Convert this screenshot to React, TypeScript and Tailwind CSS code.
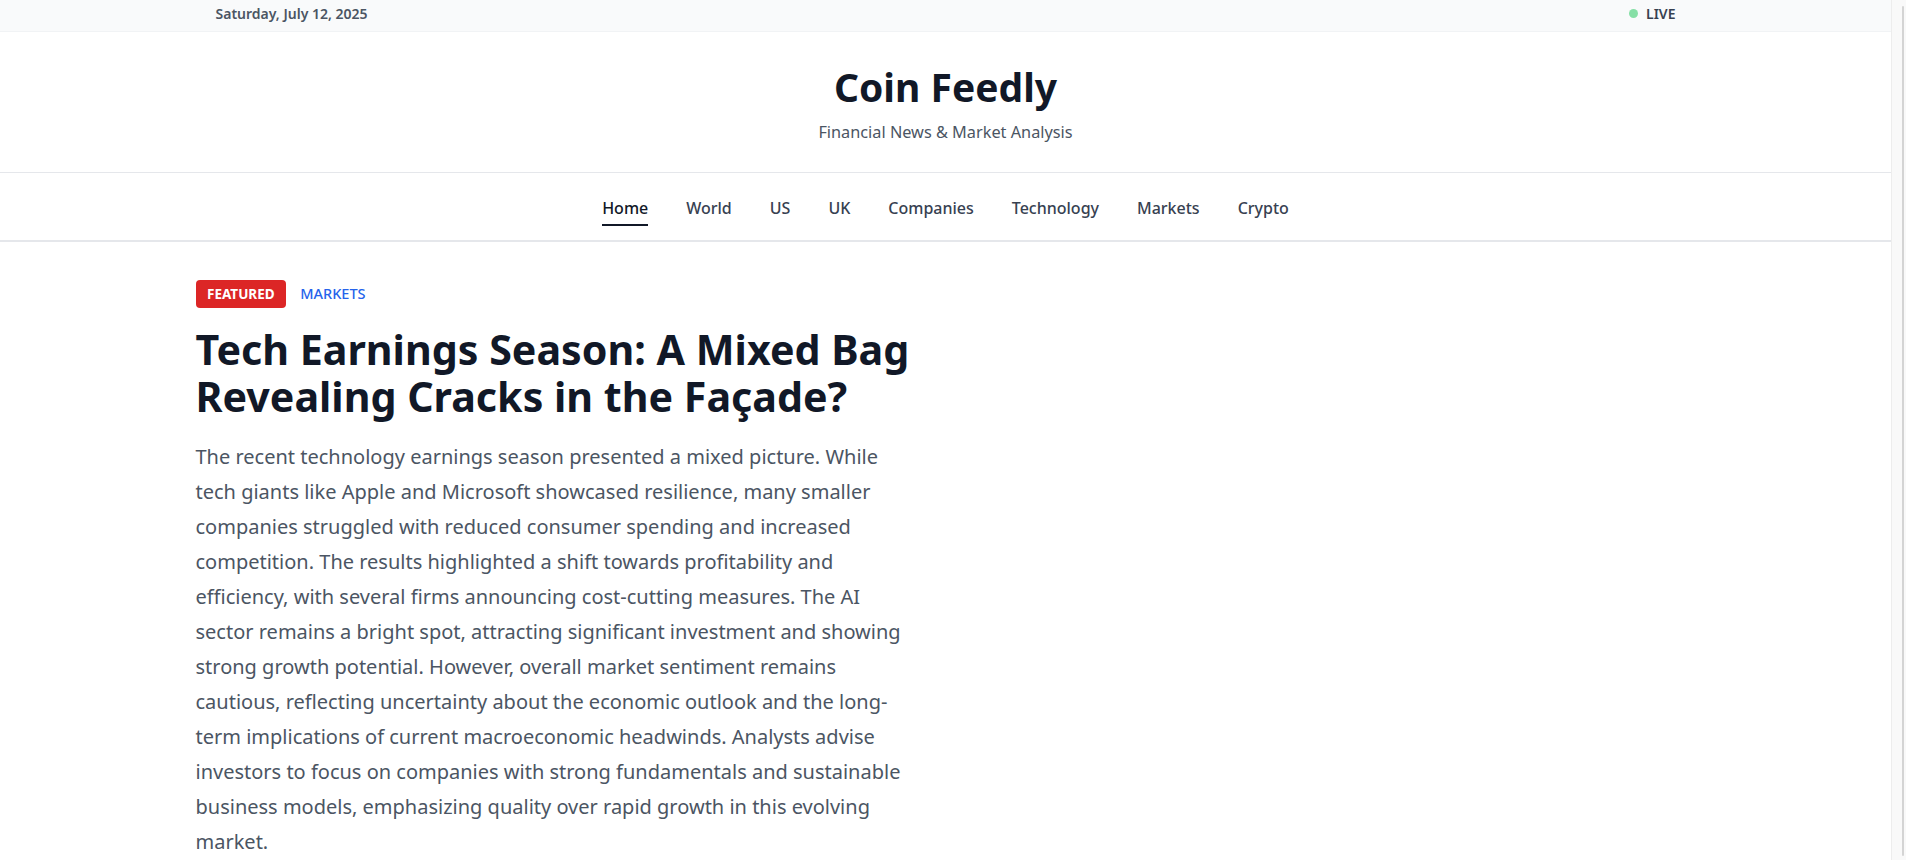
import React from "react";

const navItems = ["Home", "World", "US", "UK", "Companies", "Technology", "Markets", "Crypto"];

const TopBar = () => {
  return (
    <div className="h-[32px] bg-[#f9fafb] border-b border-[#f1f3f5]">
      <div className="mx-auto max-w-[1536px] px-[38px] h-full flex items-center justify-between pb-[5px]">
        <span className="text-[14px] font-semibold text-[#4b5563]">Saturday, July 12, 2025</span>
        <div className="flex items-center gap-[8px]">
          <span className="w-[9px] h-[9px] rounded-full bg-[#86dfa6]" />
          <span className="text-[14px] font-semibold text-[#374151]">LIVE</span>
        </div>
      </div>
    </div>
  );
};

const Header = () => {
  return (
    <header className="border-b border-[#e5e7eb] pt-[32px] pb-[28px] text-center">
      <h1 className="text-[39px] leading-[46px] font-bold text-[#111827]">Coin Feedly</h1>
      <p className="mt-[10px] text-[16.3px] leading-[24px] text-[#4b5563]">Financial News &amp; Market Analysis</p>
    </header>
  );
};

const Nav = () => {
  return (
    <nav className="h-[69px] border-b-2 border-[#e5e7eb]">
      <ul className="flex justify-center gap-[38px] pt-[23px]">
        {navItems.map((item) => (
          <li key={item}>
            <a
              className={`block pb-[4px] border-b-2 text-[16px] leading-[24px] font-medium ${
                item === "Home" ? "border-[#111827] text-[#111827]" : "border-transparent text-[#374151]"
              }`}
            >
              {item}
            </a>
          </li>
        ))}
      </ul>
    </nav>
  );
};

const FeaturedArticle = () => {
  return (
    <main className="mx-auto max-w-[1536px] px-[18px] pt-[38px]">
      <div className="grid grid-cols-2 gap-[32px]">
        <article className="max-w-[716px]">
          <div className="flex items-center gap-[14px]">
            <span className="inline-flex items-center h-[28px] px-[11.5px] rounded-[4px] bg-[#dc2626] text-white text-[13.5px] font-bold uppercase">
              Featured
            </span>
            <span className="text-[14.5px] font-medium uppercase text-[#2563eb]">Markets</span>
          </div>
          <h2 className="mt-[18px] text-[41.2px] leading-[47px] font-bold text-[#111827]">
            Tech Earnings Season: A Mixed Bag Revealing Cracks in the Façade?
          </h2>
          <p className="mt-[19px] text-[20px] leading-[35px] text-[#4b5563]">
            The recent technology earnings season presented a mixed picture. While tech giants like Apple and
            Microsoft showcased resilience, many smaller companies struggled with reduced consumer spending and
            increased competition. The results highlighted a shift towards profitability and efficiency, with several
            firms announcing cost-cutting measures. The AI sector remains a bright spot, attracting significant
            investment and showing strong growth potential. However, overall market sentiment remains cautious,
            reflecting uncertainty about the economic outlook and the long-term implications of current
            macroeconomic headwinds. Analysts advise investors to focus on companies with strong fundamentals and
            sustainable business models, emphasizing quality over rapid growth in this evolving market.
          </p>
        </article>
        <div />
      </div>
    </main>
  );
};

export default function App() {
  return (
    <div className="flex h-[860px] overflow-hidden bg-white font-['Noto_Sans',sans-serif]">
      <div className="flex-1 min-w-0">
        <TopBar />
        <Header />
        <Nav />
        <FeaturedArticle />
      </div>
      {/* fake scrollbar */}
      <div className="w-[15px] bg-[#f9f9f9] border-l border-[#ededed] flex justify-end pr-[2px] pt-[6px] pb-[4px]">
        <div className="w-[2px] h-full rounded-full bg-[#d4d4d4]" />
      </div>
    </div>
  );
}
